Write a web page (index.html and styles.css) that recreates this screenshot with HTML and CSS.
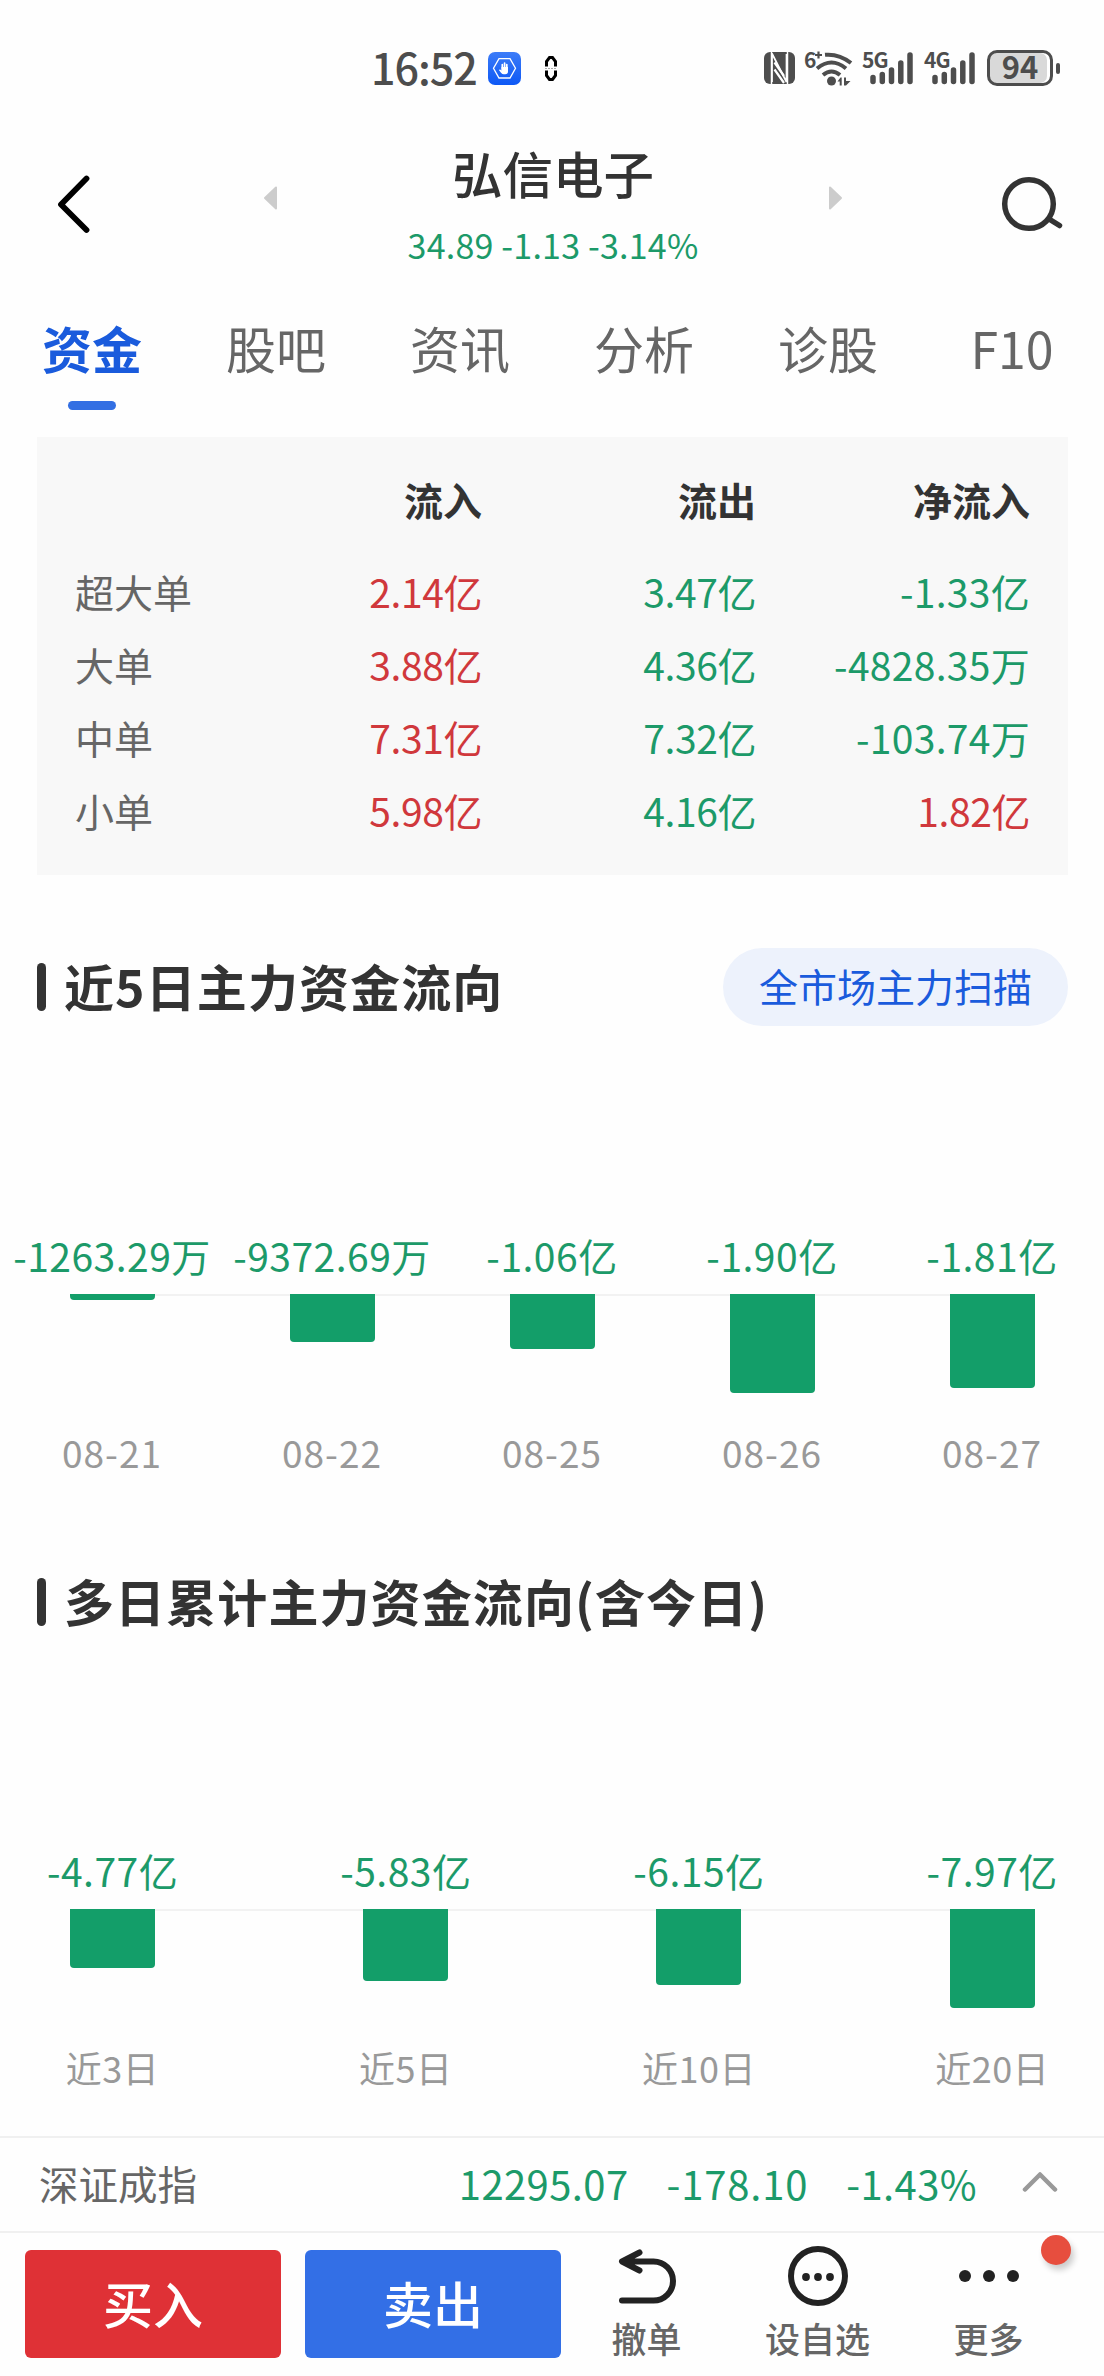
FILE: index.html
```html
<!DOCTYPE html>
<html lang="zh-CN">
<head>
<meta charset="utf-8">
<title>弘信电子</title>
<link rel="stylesheet" href="styles.css">
</head>
<body>
<div class="status">
  <span class="clock">16:52</span>
  <svg class="app-icon" width="33" height="33" viewBox="0 0 33 33">
    <defs><linearGradient id="blue" x1="0" y1="0" x2="0" y2="1"><stop offset="0" stop-color="#3c7cf8"/><stop offset="1" stop-color="#0d58f5"/></linearGradient></defs>
    <rect width="33" height="33" rx="7" fill="url(#blue)"/>
    <path d="M11 6.700h11l5.500 9.600L22 26H11L5.500 16.300z" fill="none" stroke="#fff" stroke-width="1.300"/>
    <path d="M14.300 17v-4.500M16.600 16v-5M18.800 17v-4.500" stroke="#fff" stroke-width="1.700" stroke-linecap="round"/>
    <path d="M13.500 15h6.500v4.500q0 2.800-2.800 2.800h-1.400q-1.500 0-2.600-1.300l-2.300-3q1-1.200 2.600.4z" fill="#fff"/>
  </svg>
  <svg class="pill-icon" width="12" height="27" viewBox="0 0 12 27" fill="none" stroke="#000" stroke-width="3">
    <path d="M1.500 11.500V6.500L4.500 2.500h3l3 4v5M1.500 15.500v5l3 4h3l3-4v-5"/>
    <path d="M0 13.500h12" stroke="#aaa" stroke-width="1" stroke-dasharray="2 1"/>
  </svg>
  <div class="status-right">
    <svg width="31" height="32" viewBox="0 0 31 32">
      <rect x="0" y="0" width="31" height="32" rx="6" fill="#4d4d4d"/>
      <path d="M8 30V1.500L22.500 30V2" fill="none" stroke="#fff" stroke-width="1.700"/>
      <path d="M7.500 0v32M23.500 0v32" stroke="#fff" stroke-width="1.500"/>
      <path d="M10.500 10.500L20 24M10.500 17.500L20 31" stroke="#fff" stroke-width="2.200"/>
    </svg>
    <div class="net wifi">
      <span class="mini">6</span>
      <svg width="48" height="36" viewBox="0 0 48 36">
        <path d="M10 5h7M13.500 1.500v7" stroke="#4d4d4d" stroke-width="2.200"/>
        <g fill="none" stroke="#4d4d4d" stroke-width="4">
          <path d="M20 4.800Q34 3.500 46 13"/>
          <path d="M12 18.500Q26.500 6.500 41 18.500"/>
          <path d="M18 25Q26.500 18 35 25"/>
        </g>
        <circle cx="26.500" cy="31" r="4.500" fill="#4d4d4d"/>
        <path d="M32.500 31.500l3-4h1.200v8h-2v-4zM39 27.500h2v3.500h4.500l-4.500 4.500h-2z" fill="#4d4d4d"/>
      </svg>
    </div>
    <div class="net sig">
      <span class="mini">5G</span>
      <svg width="50" height="36" viewBox="0 0 50 36">
        <path d="M10 27.500v4M19.300 24.500v7M28.500 20v11.500M37.800 13v18.500M47 5v26.500" stroke="#4d4d4d" stroke-width="5.500" stroke-linecap="round"/>
      </svg>
    </div>
    <div class="net sig sig2">
      <span class="mini">4G</span>
      <svg width="50" height="36" viewBox="0 0 50 36">
        <path d="M10 27.500v4M19.300 24.500v7M28.500 20v11.500M37.800 13v18.500M47 5v26.500" stroke="#4d4d4d" stroke-width="5.500" stroke-linecap="round"/>
      </svg>
    </div>
    <div class="battery">94</div>
    <div class="nub"></div>
  </div>
</div>

<header class="header">
  <svg class="back" width="36" height="60" viewBox="0 0 36 60"><path d="M30.500 4.500L5 30.500L30.500 56" fill="none" stroke="#000" stroke-width="5.800" stroke-linecap="round" stroke-linejoin="round"/></svg>
  <svg class="prev" width="16" height="26" viewBox="0 0 16 26"><path d="M2 13L13 2.500v21z" fill="#ccc" stroke="#ccc" stroke-width="2" stroke-linejoin="round"/></svg>
  <div class="stock"><div class="name">弘信电子</div><div class="quote">34.89 -1.13 -3.14%</div></div>
  <svg class="next" width="16" height="26" viewBox="0 0 16 26"><path d="M14 13L3 2.500v21z" fill="#ccc" stroke="#ccc" stroke-width="2" stroke-linejoin="round"/></svg>
  <svg class="search" width="62" height="60" viewBox="0 0 62 60" fill="none" stroke="#333" stroke-width="5.500"><circle cx="28" cy="29" r="24.300"/><path d="M48 44l10.500 6.500" stroke-linecap="round"/></svg>
</header>

<nav class="tabs">
  <span class="tab active">资金</span><span class="tab">股吧</span><span class="tab">资讯</span><span class="tab">分析</span><span class="tab">诊股</span><span class="tab">F10</span>
</nav>

<section class="orders">
  <div class="row head"><span></span><span>流入</span><span>流出</span><span>净流入</span></div>
  <div class="row"><span>超大单</span><span class="up">2.14亿</span><span class="down">3.47亿</span><span class="down neg">-1.33亿</span></div>
  <div class="row"><span>大单</span><span class="up">3.88亿</span><span class="down">4.36亿</span><span class="down neg">-4828.35万</span></div>
  <div class="row"><span>中单</span><span class="up">7.31亿</span><span class="down">7.32亿</span><span class="down neg">-103.74万</span></div>
  <div class="row"><span>小单</span><span class="up">5.98亿</span><span class="down">4.16亿</span><span class="up">1.82亿</span></div>
</section>

<section class="flow">
  <div class="title"><i></i><h2>近5日主力资金流向</h2><span class="scan">全市场主力扫描</span></div>
  <div class="chart five">
    <div class="col"><b>-1263.29万</b><div class="plot"><div class="bar" style="height:6px"></div></div><em>08-21</em></div>
    <div class="col"><b>-9372.69万</b><div class="plot"><div class="bar" style="height:48px"></div></div><em>08-22</em></div>
    <div class="col"><b>-1.06亿</b><div class="plot"><div class="bar" style="height:55px"></div></div><em>08-25</em></div>
    <div class="col"><b>-1.90亿</b><div class="plot"><div class="bar" style="height:99px"></div></div><em>08-26</em></div>
    <div class="col"><b>-1.81亿</b><div class="plot"><div class="bar" style="height:94px"></div></div><em>08-27</em></div>
  </div>
</section>

<section class="flow">
  <div class="title"><i></i><h2>多日累计主力资金流向(含今日)</h2></div>
  <div class="chart four">
    <div class="col"><b>-4.77亿</b><div class="plot"><div class="bar" style="height:59px"></div></div><em>近3日</em></div>
    <div class="col"><b>-5.83亿</b><div class="plot"><div class="bar" style="height:72px"></div></div><em>近5日</em></div>
    <div class="col"><b>-6.15亿</b><div class="plot"><div class="bar" style="height:76px"></div></div><em>近10日</em></div>
    <div class="col"><b>-7.97亿</b><div class="plot"><div class="bar" style="height:99px"></div></div><em>近20日</em></div>
  </div>
</section>

<div class="index">
  <span class="index-name">深证成指</span>
  <span class="down">12295.07</span><span class="down neg">-178.10</span><span class="down">-1.43%</span>
  <svg width="36" height="22" viewBox="0 0 36 22"><path d="M3 18.500L18 3.500L33 18.500" fill="none" stroke="#999" stroke-width="4.500" stroke-linecap="round" stroke-linejoin="round"/></svg>
</div>

<footer class="actions">
  <div class="btn buy">买入</div>
  <div class="btn sell">卖出</div>
  <div class="act undo">
    <svg width="60" height="60" viewBox="0 0 60 60" fill="none" stroke="#222" stroke-width="6" stroke-linecap="round" stroke-linejoin="round"><path d="M22.500 6.500L5 15.500L22.500 24.500M6 15.500H36.500a19.500 19.500 0 0 1 0 39H5"/></svg>
    <span>撤单</span>
  </div>
  <div class="act watch">
    <svg width="60" height="60" viewBox="0 0 60 60"><circle cx="30" cy="30" r="27" fill="none" stroke="#222" stroke-width="6"/><g fill="#222"><circle cx="18" cy="31" r="3.900"/><circle cx="30" cy="31" r="3.900"/><circle cx="42" cy="31" r="3.900"/></g></svg>
    <span>设自选</span>
  </div>
  <div class="act more">
    <svg width="60" height="60" viewBox="0 0 60 60" fill="#222"><circle cx="6" cy="30" r="6"/><circle cx="30" cy="30" r="6"/><circle cx="54" cy="30" r="6"/></svg>
    <span>更多</span>
    <div class="badge"></div>
  </div>
</footer>
</body>
</html>
```
FILE: styles.css
```css
* { box-sizing: border-box; }
body {
  margin: 0;
  width: 1104px;
  height: 2376px;
  overflow: hidden;
  background: #fefefe;
  color: #333;
  font-family: "Noto Sans CJK SC", sans-serif;
  font-size: 39px;
  line-height: 56px;
  display: flex;
  flex-direction: column;
}
svg { display: block; flex: none; }
span { white-space: nowrap; }
.up { color: #d0383c; }
.down { color: #1c9a69; }

.status { height: 136px; padding: 0 44px 0 371px; display: flex; align-items: center; flex: none; color: #4d4d4d; }
.clock { font-size: 43px; font-weight: 500; letter-spacing: -1px; width: 117px; line-height: 60px; margin-top: -4px; }
.pill-icon { margin-left: 24px; }
.status-right { margin-left: auto; display: flex; align-items: center; }
.net { position: relative; }
.mini { position: absolute; left: -1px; top: -6px; font-size: 21px; font-weight: 700; line-height: 30px; letter-spacing: -1px; }
.wifi { margin-left: 10px; }
.sig { margin-left: 10px; }
.sig2 { margin-left: 12px; }
.battery {
  width: 66px; height: 36px; margin-left: 12px;
  border: 3px solid #4d4d4d; border-radius: 10px;
  background: #d9d9d9; box-shadow: inset -3px 0 #fff;
  font-size: 31px; font-weight: 700; line-height: 26px; text-align: center;
}
.nub { width: 4px; height: 11px; border-radius: 2px; background: #4d4d4d; margin-left: 3px; }

.header { height: 154px; padding: 0 41px 0 56px; display: flex; flex: none; }
.back { margin-top: 38px; }
.prev { margin: 49px 0 0 171px; }
.stock { width: 548px; text-align: center; }
.name { font-size: 50.500px; line-height: 72px; font-weight: 500; }
.quote { font-size: 34px; line-height: 50px; margin-top: 12px; color: #1c9a69; letter-spacing: 0.2px; }
.next { margin-top: 49px; }
.search { margin: 39px 0 0 auto; }

.tabs { height: 147px; display: grid; grid-template-columns: repeat(6, 184px); padding-top: 21px; flex: none; }
.tab { display: flex; flex-direction: column; align-items: center; font-size: 50px; line-height: 72px; color: #666; }
.tab.active { color: #1a5bdc; font-weight: 700; }
.tab.active::after { content: ""; width: 48px; height: 9px; border-radius: 5px; background: #336fe3; margin-top: 18px; }

.orders { height: 438px; margin: 0 36px 0 37px; padding: 26px 38px; background: #f8f8f8; flex: none; }
.row { display: grid; grid-template-columns: 132px 275px 274px 274px; height: 73px; align-items: center; color: #666; }
.row span + span { text-align: right; }
.row .up, .row .down { letter-spacing: -0.4px; }
.row .neg { letter-spacing: 0.3px; }
.row .up { color: #d0383c; }
.row .down { color: #1c9a69; }
.row.head { height: 91px; padding-bottom: 19px; font-weight: 700; }
.row.head span { color: #333; }

.flow { height: 615px; padding-top: 73px; flex: none; }
.title { display: flex; align-items: center; height: 78px; padding: 0 36px 0 37px; }
.title i { width: 9px; height: 48px; border-radius: 5px; background: #333; }
.title h2 { margin: -5px 0 0 18px; font-size: 50px; line-height: 72px; font-weight: 700; letter-spacing: 1.1px; }
.scan { margin-left: auto; width: 345px; height: 78px; border-radius: 39px; background: #edf2fc; color: #1a5bdc; line-height: 74px; text-align: center; }
.chart { display: grid; margin-top: 201px; }
.five { grid-template-columns: repeat(5, 220px); margin-left: 2px; }
.four { grid-template-columns: repeat(4, 293.200px); margin-left: -34px; }
.col { display: flex; flex-direction: column; align-items: center; }
.col b { font-weight: 400; white-space: nowrap; color: #1c9a69; letter-spacing: 0.5px; }
.plot { width: 100%; height: 130px; margin-top: 11px; display: flex; justify-content: center; background: linear-gradient(#f2f2f2, #f2f2f2) 0 0 / 100% 2px no-repeat; }
.col:first-child .plot { background-size: 50% 2px; background-position: 100% 0; }
.col:last-child .plot { background-size: 50% 2px; }
.bar { width: 85px; background: #139e69; border-radius: 0 0 4px 4px; }
.col em { font-style: normal; font-size: 36px; color: #999; letter-spacing: 0.5px; }
.five em { font-size: 37px; letter-spacing: 1px; }

.index { height: 97px; margin-top: 31px; border: solid #f0f0f0; border-width: 2px 0; padding: 0 46px 0 39px; display: flex; align-items: center; flex: none; font-size: 40px; }
.index span { margin-top: -4px; }
.index-name { color: #666; font-size: 39.500px; margin-right: auto; }
.index .down { margin-left: 38px; letter-spacing: 0.4px; }
.index .neg { letter-spacing: 0.8px; }
.index svg { margin-left: 45px; margin-top: -5px; }

.actions { display: flex; padding: 17px 0 0 25px; }
.btn { width: 256px; height: 108px; border-radius: 6px; color: #fff; font-size: 50px; font-weight: 500; text-align: center; line-height: 104px; }
.buy { background: #df3136; margin-right: 24px; }
.sell { background: #336fe6; }
.act { display: flex; flex-direction: column; align-items: center; width: 171px; margin-top: -4px; position: relative; font-size: 35px; line-height: 50px; color: #666; font-weight: 500; }
.act span { margin-top: 7px; }
.badge { position: absolute; left: 138px; top: -11px; width: 30px; height: 30px; border-radius: 50%; background: #e74e3e; box-shadow: 3px 5px 6px rgba(0,0,0,.2); }
```
